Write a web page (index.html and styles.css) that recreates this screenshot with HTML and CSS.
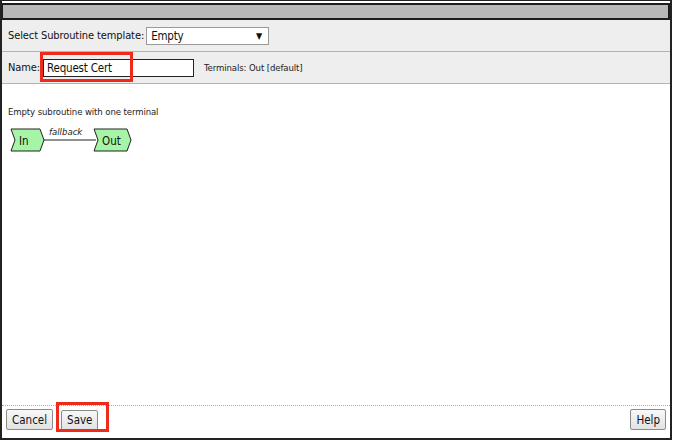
FILE: index.html
```html
<!DOCTYPE html>
<html lang="en">
  <head>
    <meta charset="UTF-8" />
    <title>New Subroutine</title>
    <link rel="stylesheet" href="styles.css">
  </head>
  <body>
    <div class="dialog">
      <div class="titlebar"></div>

      <div class="row">
        <label class="label">Select Subroutine template:</label>
        <div class="select">
          <span>Empty</span>
          <span class="arrow">&#9660;</span>
        </div>
      </div>

      <div class="row">
        <label class="label">Name:</label>
        <div class="name-wrap">
          <input type="text" class="name-input" value="Request Cert" />
          <span class="mark name-mark"></span>
        </div>
        <span class="terminals">Terminals: Out [default]</span>
      </div>

      <div class="content">
        <p class="desc">Empty subroutine with one terminal</p>
        <div class="flow">
          <svg width="125" height="30" viewBox="0 0 125 30">
            <!-- input node -->
            <polygon points="1,5 30,5 34,16 30,27 1,27 5,16" fill="#a6f5a6" stroke="#222" stroke-width="1" />
            <text x="9" y="21" class="node-text">In</text>
            <!-- connector -->
            <line x1="34" y1="16" x2="86" y2="16" stroke="#222" stroke-width="1.2" />
            <text x="39" y="11" class="edge-text">fallback</text>
            <!-- output node -->
            <polygon points="84,5 117,5 121,16 117,27 84,27 88,16" fill="#a6f5a6" stroke="#222" stroke-width="1" />
            <text x="92" y="21" class="node-text">Out</text>
          </svg>
        </div>
      </div>

      <div class="footer">
        <button class="btn">Cancel</button>
        <div class="save-wrap">
          <button class="btn">Save</button>
          <span class="mark save-mark"></span>
        </div>
        <div class="spacer"></div>
        <button class="btn">Help</button>
      </div>
    </div>
  </body>
</html>
```

FILE: styles.css
```css
* {
  margin: 0;
  padding: 0;
  box-sizing: border-box;
}

body {
  font-family: "DejaVu Sans", Tahoma, sans-serif;
  font-stretch: condensed;
  background: #ffffff;
  color: #111;
  width: 673px;
  height: 441px;
  overflow: hidden;
}

.dialog {
  width: 672px;
  height: 440px;
  border: 2px solid #222;
  border-top-width: 1px;
  display: flex;
  flex-direction: column;
  background: #fff;
}

.titlebar {
  height: 17px;
  margin: 2px 0 0 0;
  background: #b9b9b9;
  border: 2px solid #1e1e1e;
  border-left-width: 1px;
}

.row {
  height: 32px;
  display: flex;
  align-items: center;
  padding-left: 6px;
  background: #eeeeee;
  border-bottom: 1px solid #b3b3b3;
}

.label {
  font-size: 11px;
  letter-spacing: -0.1px;
  margin-right: 2px;
}

.select {
  width: 123px;
  height: 18px;
  background: #fff;
  border: 1px solid #9a9a9a;
  display: flex;
  align-items: center;
  justify-content: space-between;
  padding: 0 6px 0 4px;
  font-size: 11.5px;
  letter-spacing: -0.2px;
}

.arrow {
  font-size: 9px;
}

.name-wrap {
  position: relative;
  margin-left: 1px;
}

.name-input {
  display: block;
  width: 151px;
  height: 18px;
  border: 1px solid #222;
  padding: 0 3px;
  font-family: "DejaVu Sans", Tahoma, sans-serif;
  font-stretch: condensed;
  font-size: 11.5px;
  letter-spacing: -0.2px;
  color: #111;
}

.mark {
  position: absolute;
  border: 3px solid #ee2a1a;
  pointer-events: none;
}

.name-mark {
  left: -3px;
  top: -7px;
  width: 93px;
  height: 30px;
}

.terminals {
  font-size: 9.5px;
  letter-spacing: -0.1px;
  margin-left: 10px;
  color: #222;
}

.content {
  flex: 1;
  padding: 22px 0 0 6px;
}

.desc {
  font-size: 9.5px;
  letter-spacing: -0.1px;
  color: #222;
  margin-bottom: 7px;
}

.flow {
  margin-left: 2px;
}

.node-text {
  font-family: "DejaVu Sans", Tahoma, sans-serif;
  font-stretch: condensed;
  font-size: 11.5px;
  fill: #111;
}

.edge-text {
  font-family: "DejaVu Sans", Tahoma, sans-serif;
  font-stretch: condensed;
  font-size: 9.5px;
  font-style: italic;
  fill: #222;
}

.footer {
  height: 33px;
  border-top: 1px dotted #aaa;
  display: flex;
  align-items: flex-start;
  padding: 3px 4px 0 4px;
  gap: 8px;
}

.spacer {
  flex: 1;
}

.save-wrap {
  position: relative;
}

.save-mark {
  left: -5px;
  top: -7px;
  width: 53px;
  height: 30px;
}

.btn {
  font-family: "DejaVu Sans", Tahoma, sans-serif;
  font-stretch: condensed;
  font-size: 11.5px;
  height: 21px;
  padding: 0 5px;
  background: linear-gradient(#f8f8f8, #e2e2e2);
  border: 1px solid #8a8a8a;
  border-radius: 2px;
  color: #111;
}
```
